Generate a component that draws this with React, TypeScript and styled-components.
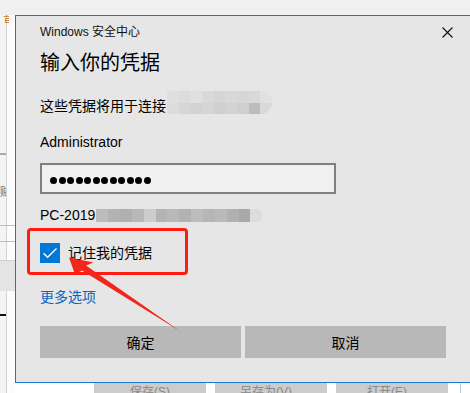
import React from 'react'
import styled, { createGlobalStyle } from 'styled-components'

const GlobalStyle = createGlobalStyle`
  html, body {
    margin: 0;
    padding: 0;
  }
  body {
    background: #ffffff;
    font-family: "Liberation Sans", "Noto Sans CJK SC", sans-serif;
    overflow: hidden;
  }
`

// pixelated (mosaic) redaction blocks
const hostShades = [
  ['#dfdfdf', '#dcdcdc', '#e0e0e0', '#d9d9d9', '#d5d5d5', '#d8d8d8', '#d6d6d6', '#d9d9d9', '#e1e1e1'],
  ['#dcdcdc', '#d6d6d6', '#d2d2d2', '#d5d5d5', '#cfcfcf', '#d3d3d3', '#cfcfcf', '#bcbcbc', '#d9d9d9'],
]

const pcShades = [
  '#bcbcbc', '#b3b3b3', '#b0b0b0', '#b8b8b8', '#cdcdcd', '#b4b4b4', '#b9b9b9',
  '#b2b2b2', '#bdbdbd', '#b6b6b6', '#bababa', '#b0b0b0', '#a9a9a9', '#dcdcdc',
]

const App: React.FC = () => {
  return (
    <>
      <GlobalStyle />
      <Desktop>
        <BackWindow>
          <TopStrip />
          <LeftStrip>
            <OrangeGlyph>音</OrangeGlyph>
            <GrayBar $top={128} />
            <FaintGlyph>贼</FaintGlyph>
            <BlueLine $top={26} />
            <BlueLine $top={15} />
            <GrayBlock />
            <BlackLine />
          </LeftStrip>
          <BottomBar>
            <BackButton>保存(S)</BackButton>
            <BackButton>另存为(V)...</BackButton>
            <BackButton>打开(E)...</BackButton>
            <BarDivider />
          </BottomBar>
        </BackWindow>

        <Dialog>
          <TitleBar>
            <TitleText>Windows 安全中心</TitleText>
            <CloseButton aria-label='close'>
              <svg width='11' height='11' viewBox='0 0 11 11'>
                <path d='M0.5 0.5 L10.5 10.5 M10.5 0.5 L0.5 10.5' stroke='#111' strokeWidth='1.1' />
              </svg>
            </CloseButton>
          </TitleBar>

          <Heading>输入你的凭据</Heading>

          <HostRow>
            <BodyText>这些凭据将用于连接</BodyText>
            <HostBlob>
              {hostShades.map((row, r) =>
                row.map((shade, c) => <Pixel key={`${r}-${c}`} $shade={shade} />)
              )}
            </HostBlob>
          </HostRow>

          <UserName>Administrator</UserName>

          <PasswordBox>
            {Array.from({ length: 12 }).map((_, i) => (
              <Dot key={i} />
            ))}
          </PasswordBox>

          <PcRow>
            <BodyText>PC-2019</BodyText>
            <PcBlob>
              {pcShades.map((shade, i) => (
                <Pixel key={i} $shade={shade} />
              ))}
            </PcBlob>
          </PcRow>

          <CheckRow>
            <Highlight />
            <CheckBox>
              <svg width='20' height='20' viewBox='0 0 20 20'>
                <path d='M3.5 10.2 L7.6 14.2 L16.5 5.4' fill='none' stroke='#fff' strokeWidth='1.4' />
              </svg>
            </CheckBox>
            <BodyText>记住我的凭据</BodyText>
          </CheckRow>

          <MoreLink href='#'>更多选项</MoreLink>

          <ButtonRow>
            <DialogButton>确定</DialogButton>
            <DialogButton>取消</DialogButton>
          </ButtonRow>
        </Dialog>

        <Arrow width='130' height='90' viewBox='60 250 130 90'>
          <polygon
            points='69,257.5 75,274.5 82,270.5 180.5,331.5 86,265.5 93.5,262.5'
            fill='#f3261b'
          />
        </Arrow>
      </Desktop>
    </>
  )
}

export default App

const Desktop = styled.div`
    position: relative;
    width: 470px;
    height: 393px;
    overflow: hidden;
    background: #ffffff;
`;

const BackWindow = styled.div`
    position: absolute;
    inset: 0;
    display: grid;
    grid-template-columns: 15px 1fr;
    grid-template-rows: 15px 1fr 10px;
`;

const TopStrip = styled.div`
    grid-column: 1 / 3;
    grid-row: 1;
    background: #f0f0f0;
`;

const LeftStrip = styled.div`
    grid-column: 1;
    grid-row: 2 / 4;
    display: flex;
    flex-direction: column;
    background: linear-gradient(to right, #f4f4f4 0 6px, #d4d4d4 6px 7px, #fcfcfc 7px);
    overflow: hidden;
`;

const OrangeGlyph = styled.span`
    margin: -4px 0 0 3px;
    font-size: 11px;
    line-height: 14px;
    color: #c8741e;
    width: 6px;
    overflow: hidden;
`;

const GrayBar = styled.div<{ $top: number }>`
    margin-top: ${({ $top }) => $top}px;
    width: 6px;
    height: 2px;
    background: #a8a8a8;
`;

const FaintGlyph = styled.span`
    margin: 30px 0 0 0;
    font-size: 11px;
    line-height: 14px;
    color: #6d6d6d;
    width: 6px;
    overflow: hidden;
`;

const BlueLine = styled.div<{ $top: number }>`
    margin-top: ${({ $top }) => $top}px;
    height: 1px;
    background: #a9c4e0;
`;

const GrayBlock = styled.div`
    margin-top: 18px;
    height: 30px;
    background: #e4e4e4;
    border-top: 1px solid #cfcfcf;
`;

const BlackLine = styled.div`
    margin-top: 23px;
    width: 6px;
    height: 2px;
    background: #111;
`;

const BottomBar = styled.div`
    grid-column: 2;
    grid-row: 3;
    display: flex;
    gap: 9px;
    padding-left: 79px;
    background: #ffffff;
`;

const BackButton = styled.div`
    width: 112px;
    height: 20px;
    background: #cccccc;
    color: #8a8a8a;
    font-size: 12px;
    line-height: 16px;
    text-align: center;
    padding-top: 1px;
    box-sizing: border-box;
`;

const BarDivider = styled.div`
    margin-left: 3px;
    width: 1px;
    background: #b8cde6;
`;

const Dialog = styled.div`
    position: absolute;
    left: 15px;
    top: 15px;
    width: 456px;
    height: 368px;
    box-sizing: border-box;
    border: 1px solid #1a78c8;
    background: #e6e6e6;
    padding: 0 24px 24px 24px;
    display: flex;
    flex-direction: column;
    color: #000;
`;

const TitleBar = styled.div`
    display: flex;
    align-items: center;
    justify-content: space-between;
    padding-top: 8px;
    height: 16px;
    margin-right: -7px;
`;

const TitleText = styled.span`
    font-size: 12px;
    line-height: 16px;
    color: #111;
`;

const CloseButton = styled.span`
    display: flex;
    margin-top: 0px;
`;

const Heading = styled.h1`
    margin: 9px 0 0 0;
    font-size: 20px;
    line-height: 28px;
    font-weight: normal;
`;

const BodyText = styled.span`
    font-size: 14px;
    line-height: 20px;
    white-space: nowrap;
`;

const HostRow = styled.div`
    display: flex;
    align-items: center;
    margin-top: 19px;
    height: 20px;
`;

const HostBlob = styled.div`
    display: grid;
    grid-template-columns: repeat(9, 1fr);
    grid-template-rows: repeat(2, 1fr);
    width: 105px;
    height: 23px;
    margin-left: 1px;
    margin-bottom: 7px;
    border-radius: 2px 11px 11px 2px;
    overflow: hidden;
`;

const Pixel = styled.div<{ $shade: string }>`
    background: ${({ $shade }) => $shade};
`;

const UserName = styled.div`
    margin-top: 16px;
    font-size: 14px;
    line-height: 20px;
`;

const PasswordBox = styled.div`
    margin-top: 11px;
    width: 296px;
    height: 32px;
    box-sizing: border-box;
    border: 2px solid #7f7f7f;
    background: #f0f0f0;
    display: flex;
    align-items: center;
    gap: 1.5px;
    padding: 3px 0 0 8px;
`;

const Dot = styled.span`
    width: 7px;
    height: 7px;
    border-radius: 50%;
    background: #000;
`;

const PcRow = styled.div`
    display: flex;
    align-items: center;
    margin-top: 11px;
    height: 20px;
`;

const PcBlob = styled.div`
    display: grid;
    grid-template-columns: repeat(14, 1fr);
    width: 166px;
    height: 13px;
    margin-left: 1px;
    border-radius: 0 6px 6px 0;
    overflow: hidden;
`;

const CheckRow = styled.div`
    position: relative;
    display: flex;
    align-items: center;
    gap: 8px;
    margin-top: 18px;
    height: 20px;
`;

const Highlight = styled.div`
    position: absolute;
    left: -13px;
    top: -15px;
    width: 161px;
    height: 47px;
    box-sizing: border-box;
    border: 3px solid #ff1d12;
    border-radius: 4px;
    pointer-events: none;
`;

const CheckBox = styled.span`
    display: flex;
    width: 20px;
    height: 20px;
    background: #0078d7;
`;

const MoreLink = styled.a`
    margin-top: 24px;
    font-size: 14px;
    line-height: 20px;
    color: #0a64c2;
    text-decoration: none;
    align-self: flex-start;
`;

const ButtonRow = styled.div`
    margin-top: 19px;
    display: grid;
    grid-template-columns: 1fr 1fr;
    gap: 4px;
`;

const DialogButton = styled.button`
    height: 32px;
    border: none;
    background: #b8b8b8;
    color: #000;
    font-family: "Liberation Sans", "Noto Sans CJK SC", sans-serif;
    font-size: 14px;
    padding: 0;
`;

const Arrow = styled.svg`
    position: absolute;
    left: 60px;
    top: 250px;
    pointer-events: none;
`;
